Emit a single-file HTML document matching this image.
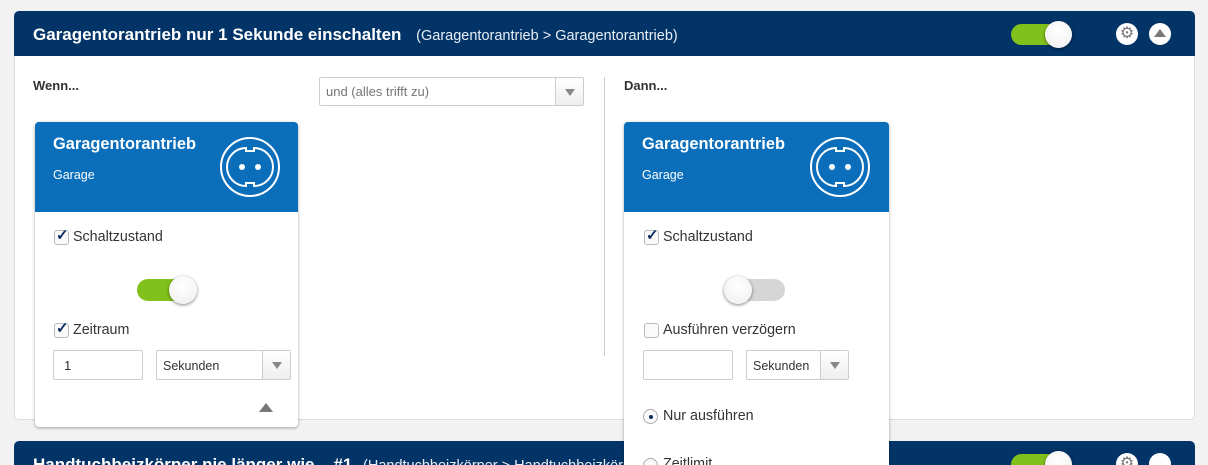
<!DOCTYPE html>
<html style="height:465px;overflow:hidden"><head><style>
*{box-sizing:border-box;margin:0;padding:0}
body{width:1208px;height:465px;background:#f2f2f2;font-family:"Liberation Sans",sans-serif;position:relative;overflow:hidden;color:#333}
.a{position:absolute}
.hdr{background:#023468;border-radius:5px 5px 0 0}
.ttl{color:#fff;font-weight:bold;font-size:17px}
.sub{color:#e8eef5;font-size:14.5px;font-weight:normal}
.card{background:#fff;border-radius:4px;box-shadow:0 1px 3px rgba(0,0,0,.35);overflow:hidden}
.ch{background:#0a6ebb;height:90px;position:relative}
.ch .n{position:absolute;left:18px;top:13px;color:#fff;font-weight:bold;font-size:16.4px}
.ch .g{position:absolute;left:18px;top:46px;color:#fff;font-size:12.5px}
.cb{position:absolute;width:15px;height:15px;border:1px solid #bbb;border-radius:3px;background:#fafafa}
.lbl{position:absolute;font-size:14.3px;color:#333}
.inp{position:absolute;border:1px solid #ccc;border-radius:2px;background:#fff;font-size:13px;padding:7px 10px;height:30px}
.sel{position:absolute;border:1px solid #ccc;border-radius:2px;background:#fff;font-size:12.5px;height:30px;padding:8px 6px}
.sel .btn{position:absolute;right:0;top:0;width:28px;height:28px;border-left:1px solid #ccc;background:linear-gradient(#fff,#eee)}
.sel .btn:after{content:"";position:absolute;left:9px;top:11px;border-left:5px solid transparent;border-right:5px solid transparent;border-top:7px solid #888}
.knob{position:absolute;border-radius:50%;background:radial-gradient(circle at 50% 35%,#fff,#eee);box-shadow:0 1px 3px rgba(0,0,0,.5)}
.radio{position:absolute;width:15px;height:15px;border:1px solid #aaa;border-radius:50%;background:#fafafa}
.ck{position:absolute;color:#0a2d5e;font-size:15px;font-weight:bold}
</style></head><body>

<div class="a" style="left:14px;top:11px;width:1181px;height:409px;background:#fff;border:1px solid #ddd;border-radius:5px"></div>
<div class="a hdr" style="left:14px;top:11px;width:1181px;height:45px"></div>
<div class="a ttl" style="left:33px;top:25px">Garagentorantrieb nur 1 Sekunde einschalten <span class="sub" style="margin-left:10px">(Garagentorantrieb &gt; Garagentorantrieb)</span></div>
<div class="a" style="left:1011px;top:24px;width:58px;height:21px;border-radius:11px;background:#80c21b"></div>
<div class="knob" style="left:1045px;top:21px;width:27px;height:27px"></div>
<div class="a" style="left:1116px;top:23px;width:22px;height:22px;border-radius:50%;background:#fff;color:#777;font-size:16px;text-align:center;line-height:22px">⚙</div>
<div class="a" style="left:1149px;top:23px;width:22px;height:22px;border-radius:50%;background:#fff"></div>
<div class="a" style="left:1154px;top:29px;border-left:6px solid transparent;border-right:6px solid transparent;border-bottom:8px solid #777"></div>

<div class="a" style="left:33px;top:78px;font-size:13px;font-weight:bold;color:#333">Wenn...</div>
<div class="sel" style="left:319px;top:77px;width:265px;height:29px;color:#777;font-size:13px;padding:6px 6px"><span>und (alles trifft zu)</span><div class="btn" style="height:27px"></div></div>
<div class="a" style="left:604px;top:77px;width:1px;height:279px;background:#ccc"></div>
<div class="a" style="left:624px;top:78px;font-size:13px;font-weight:bold;color:#333">Dann...</div>

<div class="a hdr" style="left:14px;top:441px;width:1181px;height:40px"></div>
<div class="a ttl" style="left:33px;top:455px">Handtuchbeizkörper nie länger wie &nbsp;&nbsp; #1 <span class="sub" style="margin-left:6px">(Handtuchbeizkörper &gt; Handtuchbeizkörper)</span></div>
<div class="a" style="left:1011px;top:454px;width:58px;height:21px;border-radius:11px;background:#80c21b"></div>
<div class="knob" style="left:1045px;top:451px;width:27px;height:27px"></div>
<div class="a" style="left:1116px;top:453px;width:22px;height:22px;border-radius:50%;background:#fff;color:#777;font-size:16px;text-align:center;line-height:22px">⚙</div>
<div class="a" style="left:1149px;top:453px;width:22px;height:22px;border-radius:50%;background:#fff"></div>

<div class="a card" style="left:35px;top:122px;width:263px;height:305px">
 <div class="ch"><div class="n">Garagentorantrieb</div><div class="g">Garage</div>
 <svg class="a" style="left:184px;top:14px" width="62" height="62" viewBox="0 0 62 62" fill="none" stroke="#fff" stroke-width="2"><circle cx="31" cy="31" r="29"/><path d="M27 12 A19 19 0 0 0 27 50 L27 47 L35 47 L35 50 A19 19 0 0 0 35 12 L35 15 L27 15 Z"/><circle cx="23" cy="31" r="2" fill="#fff"/><circle cx="39" cy="31" r="2" fill="#fff"/></svg>
 </div>
</div>
<div class="cb" style="left:54px;top:230px"></div><div class="ck" style="left:56px;top:226px">✓</div>
<div class="lbl" style="left:73px;top:229px">Schaltzustand</div>
<div class="a" style="left:137px;top:279px;width:58px;height:22px;border-radius:11px;background:#80c21b"></div>
<div class="knob" style="left:169px;top:276px;width:28px;height:28px"></div>
<div class="cb" style="left:54px;top:323px"></div><div class="ck" style="left:56px;top:319px">✓</div>
<div class="lbl" style="left:73px;top:322px">Zeitraum</div>
<div class="inp" style="left:53px;top:350px;width:90px">1</div>
<div class="sel" style="left:156px;top:350px;width:135px">Sekunden<div class="btn"></div></div>
<div class="a" style="left:259px;top:403px;border-left:7px solid transparent;border-right:7px solid transparent;border-bottom:9px solid #777"></div>

<div class="a card" style="left:624px;top:122px;width:265px;height:360px">
 <div class="ch"><div class="n">Garagentorantrieb</div><div class="g">Garage</div>
 <svg class="a" style="left:185px;top:14px" width="62" height="62" viewBox="0 0 62 62" fill="none" stroke="#fff" stroke-width="2"><circle cx="31" cy="31" r="29"/><path d="M27 12 A19 19 0 0 0 27 50 L27 47 L35 47 L35 50 A19 19 0 0 0 35 12 L35 15 L27 15 Z"/><circle cx="23" cy="31" r="2" fill="#fff"/><circle cx="39" cy="31" r="2" fill="#fff"/></svg>
 </div>
</div>
<div class="cb" style="left:644px;top:230px"></div><div class="ck" style="left:646px;top:226px">✓</div>
<div class="lbl" style="left:663px;top:229px">Schaltzustand</div>
<div class="a" style="left:726px;top:279px;width:59px;height:22px;border-radius:11px;background:#d6d6d6"></div>
<div class="knob" style="left:724px;top:276px;width:28px;height:28px"></div>
<div class="cb" style="left:644px;top:323px"></div>
<div class="lbl" style="left:663px;top:322px">Ausführen verzögern</div>
<div class="inp" style="left:643px;top:350px;width:90px"></div>
<div class="sel" style="left:746px;top:350px;width:103px">Sekunden<div class="btn"></div></div>
<div class="radio" style="left:643px;top:409px"></div><div class="a" style="left:649px;top:415px;width:4px;height:4px;border-radius:50%;background:#0a2d5e"></div>
<div class="lbl" style="left:663px;top:408px">Nur ausführen</div>
<div class="radio" style="left:643px;top:458px"></div>
<div class="lbl" style="left:663px;top:456px">Zeitlimit</div>
</body></html>
